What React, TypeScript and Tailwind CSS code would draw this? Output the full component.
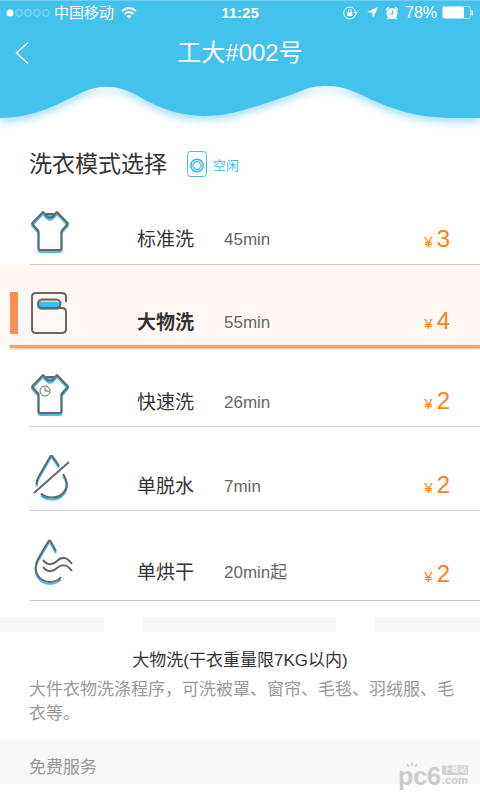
import { useState } from 'react';
import type { ReactNode } from 'react';

type IconName = 'shirt' | 'quilt' | 'quick' | 'spin' | 'dry';

interface Mode {
  id: string;
  name: string;
  time: string;
  price: number;
  icon: IconName;
  size: string;
  iconGap: string;
  priceGap: string;
}

const MODES: Mode[] = [
  { id: 'standard', name: '标准洗', time: '45min', price: 3, icon: 'shirt', size: 'h-[79px] pb-[6px]', iconGap: 'mb-[2px]', priceGap: 'mb-[2px]' },
  { id: 'large', name: '大物洗', time: '55min', price: 4, icon: 'quilt', size: 'h-[80px] pb-1', iconGap: 'mb-[3px]', priceGap: 'mb-[3px]' },
  { id: 'quick', name: '快速洗', time: '26min', price: 2, icon: 'quick', size: 'h-[78px] pb-[5px]', iconGap: 'mb-[2px]', priceGap: 'mb-[3px]' },
  { id: 'spin', name: '单脱水', time: '7min', price: 2, icon: 'spin', size: 'h-[83px] pb-[5px]', iconGap: 'mb-1', priceGap: 'mb-[3px]' },
  { id: 'dry', name: '单烘干', time: '20min起', price: 2, icon: 'dry', size: 'h-[89px] pb-[9px]', iconGap: 'mb-[6px]', priceGap: 'mb-0' },
];

const SHIRT = 'M13 2 L17 6.5 Q20 9 23 6.5 L27 2 L38 13.500 L31.500 21 V38 Q31.500 40 29.500 40 H10.500 Q8.500 40 8.500 38 V21 L2 13.500 Z';
const SPIN_DROP = 'M6.500 29.500 Q6.500 25 9 21 L20 2 Q21.500 -0.500 23 2 L29 11 M33 19 C42 32 33 42.500 22 42.500 Q15 42.500 11 38.500';
const DRY_DROP = 'M26 12 L21 3 Q19.500 0 18 3 L8 20 C1 34 11 43 20 43 Q27 43 31 38';

// Grey outline with a cyan copy underneath, shifted down a little
function Duotone({ children, extra }: { children: ReactNode; extra?: ReactNode }) {
  return (
    <svg width="43" height="46" viewBox="0 0 43 46" fill="none" strokeWidth="2" strokeLinejoin="round" className="block" aria-hidden="true">
      <g stroke="#3fc0ec" transform="translate(0 2)">{children}</g>
      <g stroke="#666">
        {children}
        {extra}
      </g>
    </svg>
  );
}

function ModeIcon({ name }: { name: IconName }) {
  if (name === 'quilt') {
    return (
      <svg width="43" height="46" viewBox="0 0 43 46" fill="none" stroke="#666" strokeWidth="2" className="block" aria-hidden="true">
        <rect x="7" y="9" width="24" height="9" rx="4.500" fill="#3fc0ec" stroke="none" />
        <path d="M11 9 H28" stroke="#e8d3c8" />
        <rect x="8" y="7.500" width="22.500" height="8.500" rx="4.200" />
        <path d="M36 10 V5 Q36 1 32 1 H6 Q2 1 2 5 V37 Q2 41 6 41 H32 Q36 41 36 37 V20 Q36 16 32 16 H28" />
      </svg>
    );
  }
  if (name === 'spin') {
    return (
      <Duotone extra={<path d="M4 38 L39 7" />}>
        <path d={SPIN_DROP} />
      </Duotone>
    );
  }
  if (name === 'dry') {
    return (
      <Duotone extra={<path d="M13 21 C18 27 23 26 27 22 C32 17 37 18 42 25 M13 28 C18 34 23 33 27 29 C32 25 37 25 42 32" />}>
        <path d={DRY_DROP} />
      </Duotone>
    );
  }
  return (
    <Duotone
      extra={name === 'quick' && (
        <g strokeWidth="1">
          <circle cx="15" cy="18" r="5" />
          <path d="M15 14.500 V18 H19" />
        </g>
      )}
    >
      <path d={SHIRT} />
      <path d="M16 4 H24" />
    </Duotone>
  );
}

function StatusBar() {
  return (
    <div className="flex h-6 items-center border-t border-[#73cdf0] px-[6px] text-white">
      <div className="flex flex-1 items-center">
        <svg width="46" height="10" viewBox="0 0 46 10" fill="none" stroke="#a5e1f7" strokeWidth="0.800" aria-hidden="true">
          <circle cx="4" cy="5" r="3.500" fill="#fff" stroke="none" />
          <circle cx="13" cy="5" r="3.300" />
          <circle cx="22" cy="5" r="3.300" />
          <circle cx="31" cy="5" r="3.300" />
          <circle cx="40" cy="5" r="3.300" />
        </svg>
        <span className="ml-[2px] text-[15px] leading-5">中国移动</span>
        <svg width="16" height="12" viewBox="0 0 16 12" fill="none" stroke="#fff" strokeWidth="1.700" className="ml-[7px]" aria-hidden="true">
          <path d="M1 4 Q8 -2 15 4" />
          <path d="M3.500 7 Q8 3 12.500 7" />
          <path d="M5.500 9 Q8 7 10.500 9 L8 11.500 Z" fill="#fff" stroke="none" />
        </svg>
      </div>
      <span className="text-[15px] leading-5 font-bold">11:25</span>
      <div className="flex flex-1 items-center justify-end">
        <svg width="15" height="14" viewBox="0 0 15 14" fill="none" stroke="#fff" aria-hidden="true">
          <path d="M12.500 8.500 A6 6 0 1 1 12.500 5.500" />
          <path d="M10.500 6 H15 L12.700 8.500 Z" fill="#fff" stroke="none" />
          <rect x="4.300" y="6.300" width="5" height="3.700" fill="#fff" stroke="none" />
          <path d="M5.300 6.500 V5 Q5.300 3.700 6.800 3.700 Q8.300 3.700 8.300 5 V6.500" />
        </svg>
        <svg width="11" height="11" viewBox="0 0 11 11" className="ml-[9px]" aria-hidden="true">
          <path d="M11 0 L6 11 L5.300 5.700 L0 5 Z" fill="#fff" />
        </svg>
        <svg width="14" height="14" viewBox="0 0 14 14" fill="none" className="ml-[7px]" aria-hidden="true">
          <circle cx="7" cy="7.500" r="5.500" fill="#fff" />
          <path d="M1 4 L3.800 1.300 M10.200 1.300 L13 4 M3.500 12 L2.500 13.300 M10.500 12 L11.500 13.300" stroke="#fff" strokeWidth="1.400" />
          <path d="M7.500 4.500 V8 H4.500" stroke="#43c2ee" strokeWidth="1.200" />
        </svg>
        <span className="ml-[6px] text-base leading-5">78%</span>
        <svg width="32" height="14" viewBox="0 0 32 14" fill="none" className="ml-[5px]" aria-hidden="true">
          <rect x="0.500" y="0.500" width="28" height="12" rx="2" stroke="#a5e1f7" />
          <rect x="1" y="1" width="21" height="11" rx="1" fill="#fff" />
          <path d="M30 4.500 Q31.500 6.500 30 9 Z" fill="#fff" stroke="#fff" />
        </svg>
      </div>
    </div>
  );
}

function Header() {
  return (
    <header>
      <div className="bg-[#43c2ee]">
        <StatusBar />
        <div className="grid h-[61px] grid-cols-[44px_1fr_44px] items-center pb-1 text-white">
          <button type="button" aria-label="返回" className="flex h-11 items-center justify-center">
            <svg width="14" height="22" viewBox="0 0 14 22" fill="none" stroke="#fff" strokeWidth="1.500" aria-hidden="true">
              <path d="M13 0.500 L1.500 11 L13 21.500" />
            </svg>
          </button>
          <h1 className="text-center text-2xl leading-8">工大#002号</h1>
        </div>
      </div>
      <svg viewBox="0 0 480 34" preserveAspectRatio="none" className="block h-[34px] w-full overflow-visible drop-shadow-[0_4px_4px_rgba(67,194,238,0.5)]" aria-hidden="true">
        <path
          fill="#43c2ee"
          d="M0 -1 H480 V33 H450 C415 32 395 25 370 14 C352 5 342 1 327 1 C318 1 312 2 306 4 C285 12 262 20 240 26 C215 33 190 32 171 26 C150 19 140 11 130 7 C115 0 98 0 83 7 C58 18 40 32 0 33 Z"
        />
      </svg>
    </header>
  );
}

function ModeRow({ mode, selected, onSelect }: { mode: Mode; selected: boolean; onSelect: () => void }) {
  return (
    <li>
      <button
        type="button"
        aria-pressed={selected}
        onClick={onSelect}
        className={`flex w-full items-end pr-[30px] pl-[10px] text-left ${mode.size} ${selected ? 'bg-[#fff8f4]' : ''}`}
      >
        <span className={`mb-[7px] h-[42px] w-2 ${selected ? 'bg-[#f98f57]' : ''}`} />
        <span className={`ml-3 w-[107px] ${mode.iconGap}`}>
          <ModeIcon name={mode.icon} />
        </span>
        <span className={`mb-1 w-[87px] text-[19px] leading-7 text-[#333] ${selected ? 'font-bold' : ''}`}>{mode.name}</span>
        <span className="mb-1 flex-1 text-[17px] leading-7 text-[#666]">{mode.time}</span>
        <span className={`flex items-baseline gap-1 leading-7 text-[#ff7f0f] ${mode.priceGap}`}>
          <span className="text-[15px]">¥</span>
          <span className="text-2xl leading-7">{mode.price}</span>
        </span>
      </button>
      {selected ? (
        <div className="ml-[10px] h-[3px] bg-[#f9a06e] shadow-[0_1px_2px_rgba(249,143,87,0.6)]" />
      ) : (
        <div className="ml-[30px] h-px bg-[#ccc]" />
      )}
    </li>
  );
}

function Watermark() {
  return (
    <div className="absolute right-3 bottom-[-6px] flex items-end gap-px text-[#c9cbd0]" aria-hidden="true">
      <svg width="12" height="5" viewBox="0 0 12 5" fill="none" stroke="#c9cbd0" strokeWidth="1.500" className="absolute top-0 left-2">
        <path d="M1 2 L3 4.500 M6 0 V4 M11 2 L9 4.500" />
      </svg>
      <span className="text-[25px] leading-7 font-bold">pc6</span>
      <span className="flex flex-col pb-1">
        <span className="rounded-xs bg-[#cfd1d5] px-px text-[8px] leading-[10px] text-white">下载站</span>
        <span className="text-[11px] leading-[11px] font-bold">.com</span>
      </span>
    </div>
  );
}

export default function App() {
  const [selected, setSelected] = useState('large');

  return (
    <div className="min-h-screen bg-white font-['Liberation_Sans','Noto_Sans_CJK_SC',sans-serif]">
      <Header />

      <main>
        <div className="flex h-[66px] items-center px-[29px] pt-6">
          <h2 className="text-[23px] leading-8 text-[#333]">洗衣模式选择</h2>
          <svg width="20" height="26" viewBox="0 0 20 26" fill="none" stroke="#43c2ee" className="ml-5" aria-hidden="true">
            <rect x="0.500" y="0.500" width="19" height="25" rx="3" />
            <circle cx="10" cy="14.500" r="6.200" stroke="#3fb5e8" strokeWidth="1.500" />
            <path d="M8 10.700 H12 L14.300 14.500 L12 18.300 H8 L5.700 14.500 Z" strokeWidth="1.300" />
          </svg>
          <span className="ml-[6px] pt-1 text-[13px] leading-5 text-[#43c2ee]">空闲</span>
        </div>

        <ul>
          {MODES.map(mode => (
            <ModeRow key={mode.id} mode={mode} selected={mode.id === selected} onSelect={() => setSelected(mode.id)} />
          ))}
        </ul>

        {/* Divider with two notches */}
        <div className="mt-4 grid h-[15px] grid-cols-[104fr_38px_194fr_38px_106fr]">
          <div className="bg-[#f7f7f7]" />
          <div />
          <div className="bg-[#f7f7f7]" />
          <div />
          <div className="bg-[#f7f7f7]" />
        </div>

        <section className="pt-[17px] pb-[14px]">
          <h3 className="text-center text-[17px] leading-6 text-[#333]">大物洗(干衣重量限7KG以内)</h3>
          <p className="mt-[5px] pr-5 pl-[29px] text-[17px] leading-6 text-[#999]">大件衣物洗涤程序，可洗被罩、窗帘、毛毯、羽绒服、毛衣等。</p>
        </section>

        <section className="relative bg-[#f7f7f7] px-[29px] pt-4 pb-1">
          <h3 className="text-[17px] leading-6 text-[#999]">免费服务</h3>
          <Watermark />
        </section>
      </main>
    </div>
  );
}
